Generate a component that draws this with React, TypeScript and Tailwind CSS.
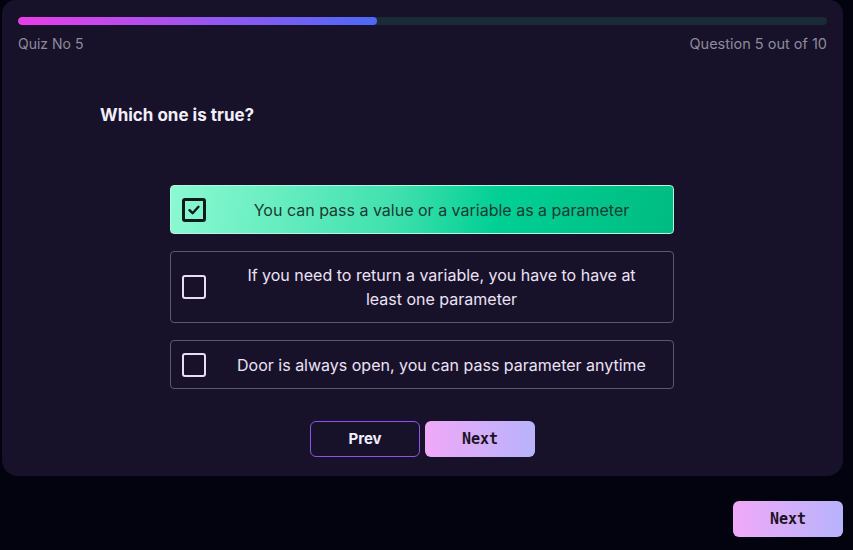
import React from "react";

const sans = { fontFamily: "Inter, 'Noto Sans', sans-serif" };

function Box({ checked }: { checked?: boolean }) {
  if (checked) {
    return (
      <div className="w-6 h-6 shrink-0 rounded-[3px] border-[3px] border-[#0e1a1c] flex items-center justify-center">
        <svg width="14" height="14" viewBox="0 0 14 14" fill="none">
          <path d="M2.5 7.2 L5.6 10.2 L11.5 3.8" stroke="#0e1a1c" strokeWidth="2.4" strokeLinecap="round" strokeLinejoin="round" />
        </svg>
      </div>
    );
  }
  return <div className="w-6 h-6 shrink-0 rounded-[3px] border-[2.5px] border-[#eadcf7]" />;
}

function Option({ text, checked }: { text: React.ReactNode; checked?: boolean }) {
  return (
    <div
      className={
        "flex items-center gap-4 pl-[11px] pr-[12px] py-[11px] min-h-[49px] rounded-[4px] border " +
        (checked
          ? "border-[#b6f5df] bg-[linear-gradient(100deg,#8cf9d2_0%,#3fe0ad_45%,#00cf94_65%,#00bc82_100%)]"
          : "border-[#5d5670]")
      }
    >
      <Box checked={checked} />
      <div
        className={
          "flex-1 text-center text-[16px] leading-6 " + (checked ? "text-[#1b3a33]" : "text-[#ece2f7]")
        }
      >
        {text}
      </div>
    </div>
  );
}

export default function App() {
  return (
    <div className="w-[853px] h-[550px] bg-[#03030f] pl-[2px] pr-[10px] flex flex-col" style={sans}>
      <div className="h-[476px] bg-[#17122a] rounded-b-[16px] rounded-t-[14px] px-4 pt-[17px] flex flex-col">
        <div className="h-2 rounded-full bg-[#1a2a36] overflow-hidden">
          <div className="h-full w-[359px] rounded-full bg-[linear-gradient(90deg,#e93de8,#a553ef_45%,#4c69f7)]" />
        </div>
        <div className="mt-[9px] flex justify-between text-[14px] leading-5 text-[#8e8a9c]">
          <span>Quiz No 5</span>
          <span className="text-[14.5px]">Question 5 out of 10</span>
        </div>
        <div className="mx-auto w-[645px] mt-[49px] text-[17px] leading-6 font-bold text-[#f2eefa]">Which one is true?</div>
        <div className="ml-[152px] w-[504px] mt-[58px] flex flex-col gap-[17px]">
          <Option checked text="You can pass a value or a variable as a parameter" />
          <Option
            text={
              <>
                If you need to return a variable, you have to have at
                <br />
                least one parameter
              </>
            }
          />
          <Option text="Door is always open, you can pass parameter anytime" />
        </div>
        <div className="mt-[32px] flex justify-center gap-[5px]">
          <button className="w-[110px] h-9 rounded-[6px] border border-[#8d54e6] text-[15px] font-bold text-[#f3ecff]">
            Prev
          </button>
          <button
            className="w-[110px] h-9 rounded-[6px] bg-[linear-gradient(90deg,#f0a9f8,#b7b3fc)] text-[15px] font-bold text-[#1a1424]"
            style={{ fontFamily: "'DejaVu Sans Mono', monospace" }}
          >
            Next
          </button>
        </div>
      </div>
      <div className="flex justify-end mt-[25px]">
        <button
          className="w-[110px] h-9 rounded-[6px] bg-[linear-gradient(90deg,#f0a9f8,#b7b3fc)] text-[15px] font-bold text-[#1a1424]"
          style={{ fontFamily: "'DejaVu Sans Mono', monospace" }}
        >
          Next
        </button>
      </div>
    </div>
  );
}
